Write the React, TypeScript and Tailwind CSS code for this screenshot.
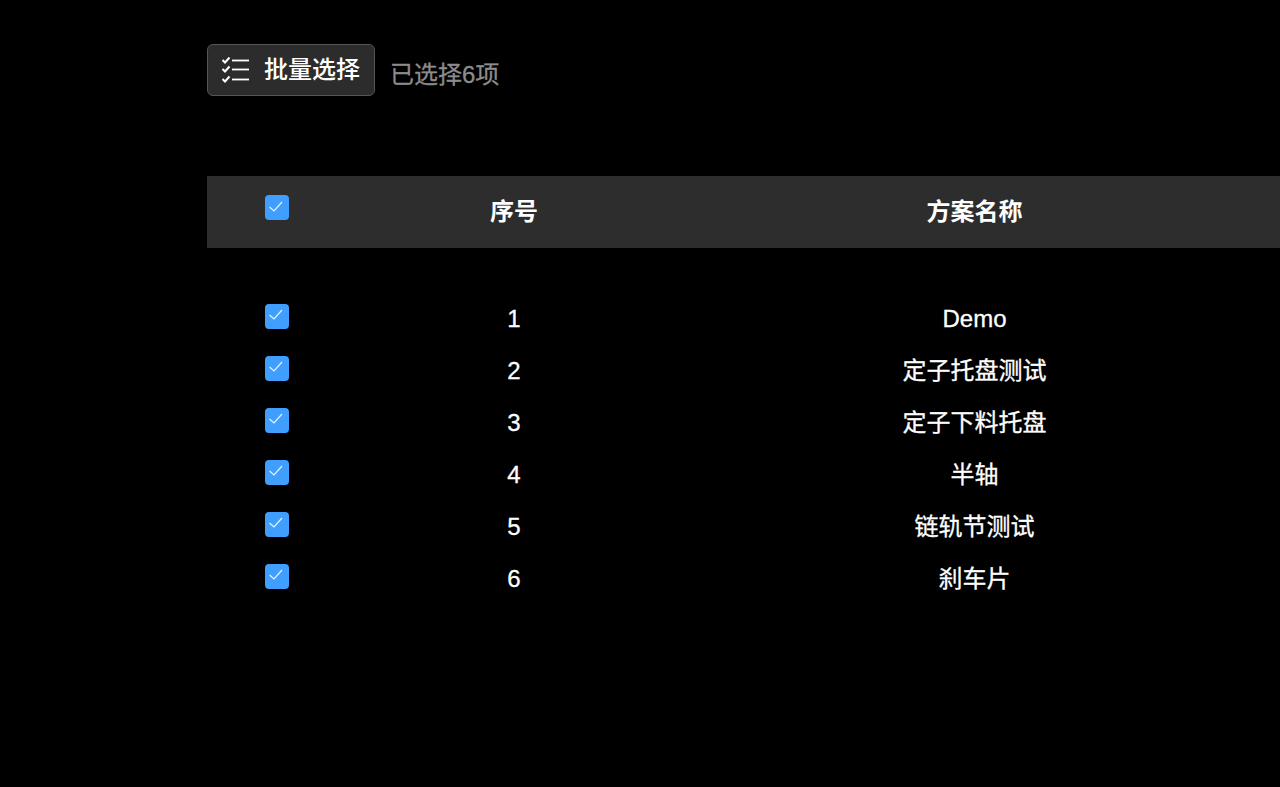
import React from 'react';

const FONT = "font-['Liberation_Sans','Noto_Sans_CJK_SC',sans-serif]";

const plans = ['Demo', '定子托盘测试', '定子下料托盘', '半轴', '链轨节测试', '刹车片'];

function CheckBox() {
  return (
    <span className="flex h-[25px] w-[24px] items-center justify-center rounded-[4px] bg-[#409eff]">
      <svg width="18" height="18" viewBox="0 0 18 18" fill="none" className="-mt-[2px]">
        <path d="M1.5 9L6 13L14 4" stroke="#e8f3ff" strokeWidth="1.2" />
      </svg>
    </span>
  );
}

function ListIcon() {
  return (
    <svg width="28" height="26" viewBox="0 0 28 26" fill="none" stroke="#fff">
      <g strokeWidth="2">
        <path d="M1.5 3L4 5.5L8.5 0.5" />
        <path d="M1.5 12L4 14.5L8.5 9.5" />
        <path d="M1.5 22L4 24.5L8.5 19.5" />
      </g>
      <g strokeWidth="1.8">
        <path d="M11 3.5H28" />
        <path d="M11 12.5H28" />
        <path d="M11 22.5H28" />
      </g>
    </svg>
  );
}

export default function App() {
  return (
    <div className={`h-[787px] w-[1280px] overflow-hidden bg-black pl-[207px] pt-[44px] text-white ${FONT}`}>
      <div className="flex items-center">
        <button className="flex h-[52px] w-[168px] items-center rounded-[6px] border border-[#555] bg-[#2c2c2c] pl-[13px] pb-[1px]">
          <ListIcon />
          <span className="ml-[15px] text-[24px] font-medium leading-none">批量选择</span>
        </button>
        <span className="ml-[15px] mt-[10px] text-[24px] leading-none text-[#8c8c8c] [-webkit-text-stroke-width:0.3px]">已选择6项</span>
      </div>

      <div className="mt-[80px] flex h-[72px] w-[1073px] items-center bg-[#2d2d2d] text-[24px] font-bold">
        <div className="flex w-[140px] justify-center pb-[9px]"><CheckBox /></div>
        <div className="w-[334px] text-center">序号</div>
        <div className="w-[587px] text-center">方案名称</div>
      </div>

      <div className="mt-[44px] w-[1073px] text-[24px] [-webkit-text-stroke-width:0.3px]">
        {plans.map((name, index) => (
          <div key={name} className="flex h-[52px] items-center">
            <div className="flex w-[140px] justify-center pb-[4px]"><CheckBox /></div>
            <div className="w-[334px] pt-[2px] text-center">{index + 1}</div>
            <div className="w-[587px] pt-[2px] text-center">{name}</div>
          </div>
        ))}
      </div>
    </div>
  );
}
